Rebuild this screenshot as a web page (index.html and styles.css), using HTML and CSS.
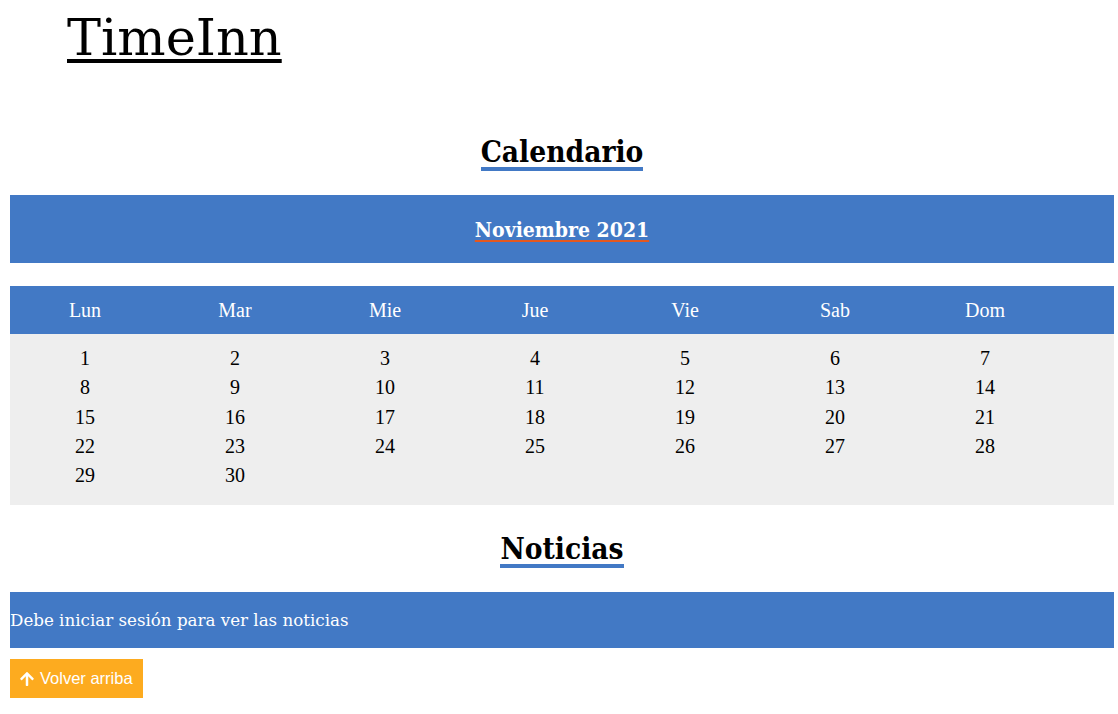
FILE: index.html
```html
<!DOCTYPE html>
<html lang="es">
<head>
<meta charset="utf-8">
<title>TimeInn</title>
<link rel="stylesheet" href="styles.css">
</head>
<body>
<header class="site-header">
  <h1 class="brand"><a href="#">TimeInn</a></h1>
</header>
<main class="main">
  <section class="section">
    <h2 class="section-title">Calendario</h2>
    <div class="month-band"><span class="month-name">Noviembre 2021</span></div>
    <div class="week-row">
      <div class="cell">Lun</div><div class="cell">Mar</div><div class="cell">Mie</div><div class="cell">Jue</div><div class="cell">Vie</div><div class="cell">Sab</div><div class="cell">Dom</div>
    </div>
    <div class="days">
      <div class="cell">1</div><div class="cell">2</div><div class="cell">3</div><div class="cell">4</div><div class="cell">5</div><div class="cell">6</div><div class="cell">7</div>
      <div class="cell">8</div><div class="cell">9</div><div class="cell">10</div><div class="cell">11</div><div class="cell">12</div><div class="cell">13</div><div class="cell">14</div>
      <div class="cell">15</div><div class="cell">16</div><div class="cell">17</div><div class="cell">18</div><div class="cell">19</div><div class="cell">20</div><div class="cell">21</div>
      <div class="cell">22</div><div class="cell">23</div><div class="cell">24</div><div class="cell">25</div><div class="cell">26</div><div class="cell">27</div><div class="cell">28</div>
      <div class="cell">29</div><div class="cell">30</div>
    </div>
  </section>
  <section class="section news">
    <h2 class="section-title">Noticias</h2>
    <div class="news-bar">Debe iniciar sesión para ver las noticias</div>
  </section>
  <a class="top-btn" href="#"><svg class="top-icon" viewBox="0 0 448 512" width="14" height="16" aria-hidden="true"><path fill="#fff" d="M34.9 289.5l-22.2-22.2c-9.4-9.4-9.4-24.6 0-33.9L207 39c9.4-9.4 24.6-9.4 33.9 0l194.3 194.3c9.4 9.4 9.4 24.6 0 33.9L413 289.4c-9.5 9.5-25 9.3-34.3-.4L264 168.6V456c0 13.3-10.7 24-24 24h-32c-13.3 0-24-10.7-24-24V168.6L69.2 289.1c-9.3 9.8-24.8 10-34.3.4z"/></svg>Volver arriba</a>
  <div class="scroll-thumb"></div>
</main>
</body>
</html>
```
FILE: styles.css
```css
html, body {
  background: #ffffff;
}
body {
  margin: 8px 4px 0 10px;
  font-family: "Liberation Serif", serif;
  color: #000;
}
.site-header {
  padding-left: 57px;
  height: 129px;
}
.brand {
  margin: 0;
  font-family: "DejaVu Serif", serif;
  font-weight: normal;
  font-size: 51px;
  line-height: 60px;
}
.brand a {
  color: #000;
  text-decoration: underline;
  text-decoration-thickness: 4px;
  text-underline-offset: 4px;
}
.main {
  position: relative;
  width: 1104px;
}
.section {
  display: flex;
  flex-direction: column;
  align-items: stretch;
}
.section-title {
  align-self: center;
  margin: 0;
  font-family: "DejaVu Serif Condensed", "DejaVu Serif", serif;
  font-stretch: condensed;
  font-weight: bold;
  font-size: 29.6px;
  line-height: 30px;
  border-bottom: 4px solid #4279c5;
}
.month-band {
  margin-top: 24px;
  height: 68px;
  background: #4279c5;
  display: flex;
  align-items: center;
  justify-content: center;
}
.month-name {
  color: #fff;
  font-family: "DejaVu Serif Condensed", "DejaVu Serif", serif;
  font-stretch: condensed;
  font-weight: bold;
  font-size: 21px;
  text-decoration: underline;
  text-decoration-color: #e4581f;
  text-decoration-thickness: 2px;
  text-underline-offset: 3px;
}
.week-row {
  margin-top: 23px;
  height: 48px;
  background: #4279c5;
  display: grid;
  grid-template-columns: repeat(7, 150px);
  align-items: center;
  color: #fff;
  font-size: 20px;
}
.cell {
  text-align: center;
}
.days {
  background: #eeeeee;
  display: grid;
  grid-template-columns: repeat(7, 150px);
  grid-auto-rows: 29.25px;
  line-height: 29px;
  padding: 10px 0 15px;
  font-size: 20px;
}
.news {
  margin-top: 29px;
}
.news-bar {
  margin-top: 24px;
  height: 56px;
  background: #4279c5;
  color: #fff;
  display: flex;
  align-items: center;
  font-family: "DejaVu Serif", serif;
  font-size: 16.7px;
}
.top-btn {
  margin-top: 11px;
  display: inline-flex;
  align-items: center;
  gap: 6px;
  height: 39px;
  padding: 0 10px 0 10px;
  box-sizing: border-box;
  background: #fdab1f;
  color: #fff;
  text-decoration: none;
  font-family: "Liberation Sans", Arial, sans-serif;
  font-size: 16.5px;
}
.top-icon {
  display: block;
}
.scroll-thumb {
  position: absolute;
  top: 57px;
  right: -4px;
  width: 3px;
  height: 361px;
  background: #cdcdcd;
}
```
